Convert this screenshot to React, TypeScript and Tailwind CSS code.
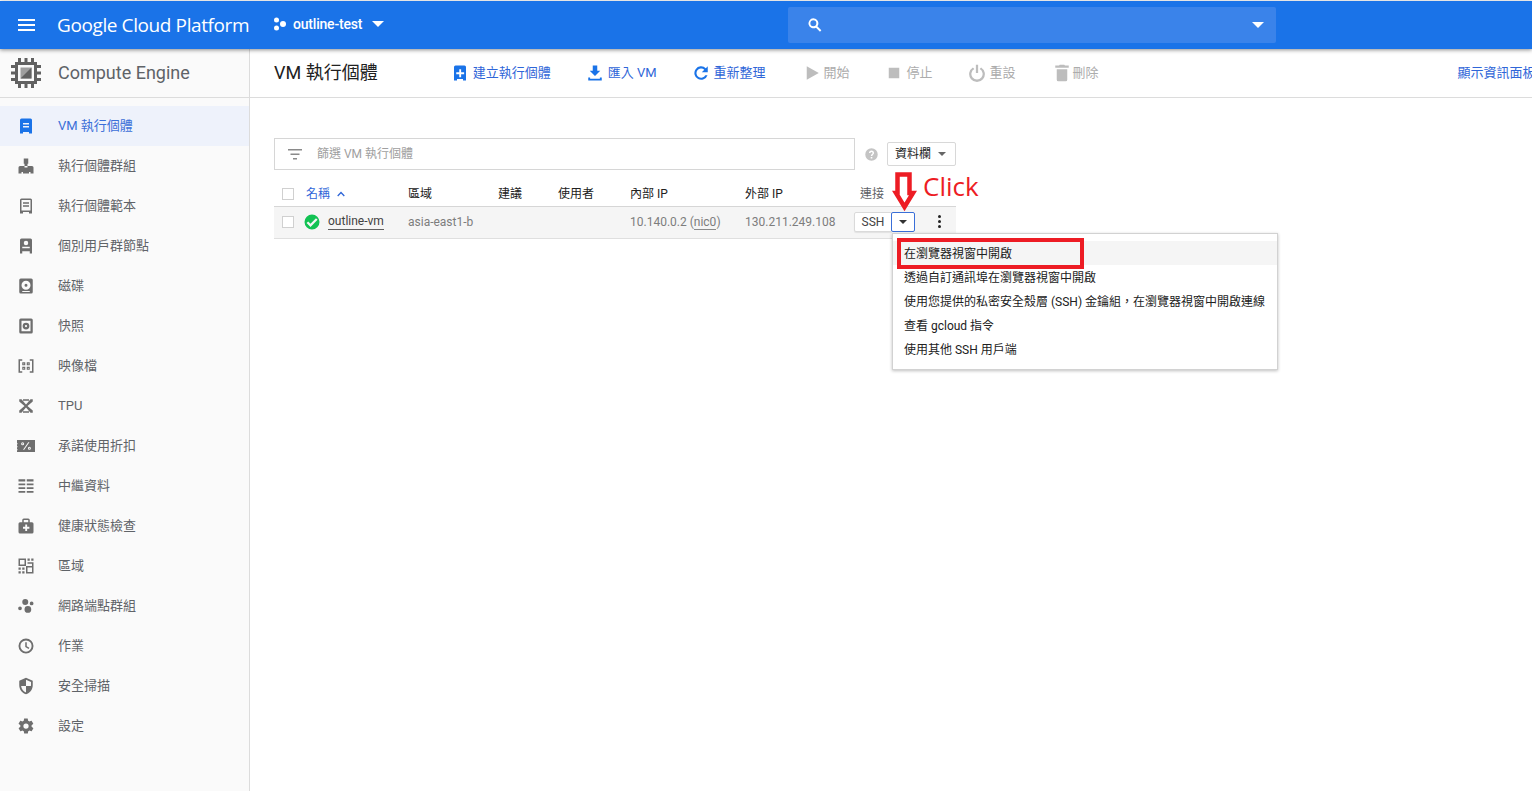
import type { ReactNode } from "react";

const FONT = "font-['Roboto','Noto_Sans_CJK_TC','Noto_Sans_CJK_SC',sans-serif]";

function Icon({ d, size = 18, className = "" }: { d: string; size?: number; className?: string }) {
  return (
    <svg className={`shrink-0 ${className}`} fill="currentColor" height={size} viewBox="0 0 24 24" width={size}>
      <path d={d} fillRule="evenodd" />
    </svg>
  );
}

const ICONS = {
  instance: "M6 2h12a2 2 0 0 1 2 2v18h-4v-2H8v2H4V4a2 2 0 0 1 2-2zm2 6v2h8V8H8zm0 4v2h8v-2H8z",
  group: "M9 2h6v7h-1v3h6a2 2 0 0 1 2 2v8h-4v-2h-2v2h-4v-8h2v-2h-4v2h2v8H8v-2H6v2H2v-8a2 2 0 0 1 2-2h6V9H9V2z",
  template: "M6 2h12a2 2 0 0 1 2 2v18h-4v-2H8v2H4V4a2 2 0 0 1 2-2zm0 2v14h12V4H6zm2 3h8v2H8V7zm0 4h8v2H8v-2z",
  node: "M6 2h12a2 2 0 0 1 2 2v18h-3v-3H7v3H4V4a2 2 0 0 1 2-2zm6 3a3 3 0 1 0 0 6 3 3 0 0 0 0-6zm-5 8v2h10v-2H7z",
  disk: "M5 2h14a2 2 0 0 1 2 2v16a2 2 0 0 1-2 2H5a2 2 0 0 1-2-2V4a2 2 0 0 1 2-2zm7 3a6 6 0 1 0 0 12 6 6 0 0 0 0-12zm0 4a2 2 0 1 1 0 4 2 2 0 0 1 0-4zM7 18.500h10V20H7z",
  snapshot: "M5 2h14a2 2 0 0 1 2 2v16a2 2 0 0 1-2 2H5a2 2 0 0 1-2-2V4a2 2 0 0 1 2-2zm1 3v14h12V5H6zm6 2.500a4.500 4.500 0 1 1 0 9 4.500 4.500 0 0 1 0-9zm0 3a1.500 1.500 0 1 0 0 3 1.500 1.500 0 0 0 0-3z",
  image: "M2 3h5v2H4v14h3v2H2V3zm15 0h5v18h-5v-2h3V5h-3V3zM7 7h4v4H7V7zm6 0h4v4h-4V7zM7 13h4v4H7v-4zm6 0h4v4h-4v-4zM8.500 8.500v1h1v-1h-1zm6 0v1h1v-1h-1zm-6 6v1h1v-1h-1zm6 0v1h1v-1h-1z",
  tpu: "M3 3h3l6 7 6-7h3v3l-7 6 7 6v3h-3l-6-7-6 7H3v-3l7-6-7-6V3zM8 3h8v2H8V3zm0 16h8v2H8v-2z",
  discount: "M0 4h24v16H0v-2l1-1-1-1v-2l1-1-1-1v-2l1-1-1-1V6zm7.500 3a2 2 0 1 0 0 4 2 2 0 0 0 0-4zm0 1.300a.7.700 0 1 1 0 1.400.7.700 0 0 1 0-1.400zM15 7l-7 10h1.600l7-10H15zm1.500 6a2 2 0 1 0 0 4 2 2 0 0 0 0-4zm0 1.300a.7.700 0 1 1 0 1.400.7.700 0 0 1 0-1.400z",
  metadata: "M2 3h9v3H2V3zm11 0h9v3h-9V3zM2 8.500h9v2.500H2V8.500zm11 0h9v2.500h-9V8.500zM2 13.500h9V16H2v-2.500zm11 0h9V16h-9v-2.500zM2 18.500h9V21H2v-2.500zm11 0h9V21h-9v-2.500z",
  health: "M9 2h6a2 2 0 0 1 2 2v3h3a2 2 0 0 1 2 2v11a2 2 0 0 1-2 2H4a2 2 0 0 1-2-2V9a2 2 0 0 1 2-2h3V4a2 2 0 0 1 2-2zm0 2v3h6V4H9zm2 6v3H8v2.500h3v3h2.500v-3h3V13h-3v-3H11z",
  zones: "M2 2h10v10H2V2zm2 2v6h6V4H4zm10-2h3v3h-3V2zm5 0h3v3h-3V2zM14 7h8v15H12V12h2V7zm0 7v6h6v-6h-6zm0-5v3h6V9h-6zM2 14h3v3H2v-3zm5 0h3v3H7v-3zM2 19h3v3H2v-3zm5 0h3v3H7v-3z",
  neg: "M11 2.500a4 4 0 1 1 0 8 4 4 0 0 1 0-8zM19.500 6a2.500 2.500 0 1 1 0 5 2.500 2.500 0 0 1 0-5zM4 12.500A2.500 2.500 0 1 1 4 17.500 2.500 2.500 0 0 1 4 12.500zM14.500 12a4.500 4.500 0 1 1 0 9 4.500 4.500 0 0 1 0-9z",
  clock: "M12 2a10 10 0 1 1 0 20 10 10 0 0 1 0-20zm0 2.500a7.500 7.500 0 1 0 0 15 7.500 7.500 0 0 0 0-15zM11 7h2v5.200l3.500 2.100-1 1.600L11 13.300V7z",
  shield: "M12 1l9 4v6c0 5.500-3.800 10.700-9 12-5.200-1.300-9-6.500-9-12V5l9-4zm0 2.500V12H5.500c.5 4 3 7.600 6.500 8.700V12h6.500c.1-.4.200-.7.200-1V6.500L12 3.500z",
  gear: "M19.400 13c0-.3.100-.6.100-1s0-.7-.1-1l2.100-1.600c.2-.2.200-.4.100-.6l-2-3.500c-.1-.2-.4-.3-.6-.2l-2.500 1c-.5-.4-1.100-.7-1.700-1l-.4-2.600c0-.3-.2-.5-.5-.5h-4c-.2 0-.5.200-.5.400l-.4 2.700c-.6.200-1.100.6-1.700 1l-2.500-1c-.2-.1-.5 0-.6.200l-2 3.500c-.1.200-.1.400.1.600L4.500 11c0 .3-.1.700-.1 1s0 .7.1 1l-2.100 1.600c-.2.200-.2.400-.1.600l2 3.500c.1.200.4.300.6.200l2.500-1c.5.400 1.100.7 1.700 1l.4 2.600c0 .2.200.4.500.4h4c.2 0 .5-.2.500-.4l.4-2.600c.6-.3 1.200-.6 1.700-1l2.500 1c.2.100.5 0 .6-.2l2-3.500c.1-.2.100-.5-.1-.6L19.400 13zM12 15.500a3.500 3.500 0 1 1 0-7 3.500 3.500 0 0 1 0 7z",
  add: "M6 2h12a2 2 0 0 1 2 2v18h-4v-2H8v2H4V4a2 2 0 0 1 2-2zm5 5v4H7v2.500h4v4h2.500v-4h4V11h-4V7H11z",
  import: "M9 2h6v7h4l-7 7-7-7h4V2zM3 18h2.500v1.500h13V18H21v4H3v-4z",
  refresh: "M18.400 5.600A9 9 0 1 0 20.700 15h-3a6.200 6.200 0 1 1-1.300-7.400L13 11h8V3l-2.600 2.600z",
  play: "M5 3l16 9-16 9V3z",
  stop: "M5 5h14v14H5V5z",
  power: "M10.500 1h3v11h-3V1zM6.500 4.500l2 2.200a7.500 7.500 0 1 0 7 0l2-2.200a10.500 10.500 0 1 1-11 0z",
  trash: "M9 1h6l1 1h5v3H3V2h5l1-1zM5 7h14v14a2 2 0 0 1-2 2H7a2 2 0 0 1-2-2V7z",
  search: "M9.500 2a7.500 7.500 0 0 1 6 12l6 6-2 2-6-6a7.500 7.500 0 1 1-4-14zm0 3a4.500 4.500 0 1 0 0 9 4.500 4.500 0 0 0 0-9z",
  help: "M12 2a10 10 0 1 1 0 20 10 10 0 0 1 0-20zm-1.300 14v2.500h2.600V16h-2.600zM12 5.500a4 4 0 0 0-4 4h2.300a1.700 1.700 0 1 1 3.400 0c0 1.700-2.800 1.700-2.800 5h2.400c0-2.300 2.700-2.600 2.700-5a4 4 0 0 0-4-4z",
  check: "M12 2a10 10 0 1 1 0 20 10 10 0 0 1 0-20zm5.300 5L10 14.300 6.900 11.200 4.800 13.300 10 18.500l9.400-9.400L17.300 7z",
};

const NAV: { label: string; icon: string }[] = [
  { label: "VM 執行個體", icon: ICONS.instance },
  { label: "執行個體群組", icon: ICONS.group },
  { label: "執行個體範本", icon: ICONS.template },
  { label: "個別用戶群節點", icon: ICONS.node },
  { label: "磁碟", icon: ICONS.disk },
  { label: "快照", icon: ICONS.snapshot },
  { label: "映像檔", icon: ICONS.image },
  { label: "TPU", icon: ICONS.tpu },
  { label: "承諾使用折扣", icon: ICONS.discount },
  { label: "中繼資料", icon: ICONS.metadata },
  { label: "健康狀態檢查", icon: ICONS.health },
  { label: "區域", icon: ICONS.zones },
  { label: "網路端點群組", icon: ICONS.neg },
  { label: "作業", icon: ICONS.clock },
  { label: "安全掃描", icon: ICONS.shield },
  { label: "設定", icon: ICONS.gear },
];

const ACTIONS = [
  { label: "建立執行個體", icon: ICONS.add, left: "ml-[73px] gap-1", active: true },
  { label: "匯入 VM", icon: ICONS.import, left: "ml-[35px] gap-1", active: true },
  { label: "重新整理", icon: ICONS.refresh, left: "ml-[35px] gap-1", active: true },
  { label: "開始", icon: ICONS.play, left: "ml-[37px] gap-[3px]", active: false },
  { label: "停止", icon: ICONS.stop, left: "ml-[35px] gap-1", active: false },
  { label: "重設", icon: ICONS.power, left: "ml-[35px] gap-1", active: false },
  { label: "刪除", icon: ICONS.trash, left: "ml-[37px] gap-0.5", active: false },
];

const MENU = [
  "在瀏覽器視窗中開啟",
  "透過自訂通訊埠在瀏覽器視窗中開啟",
  "使用您提供的私密安全殼層 (SSH) 金鑰組\uFF0C在瀏覽器視窗中開啟連線",
  "查看 gcloud 指令",
  "使用其他 SSH 用戶端",
];

function Caret({ className = "" }: { className?: string }) {
  return (
    <span className={`inline-block h-0 w-0 border-x-[4px] border-t-[4px] border-x-transparent border-t-current ${className}`} />
  );
}

function Checkbox() {
  return <span className="ml-2 block h-3 w-3 border border-[#d0d0d0] bg-white" />;
}

function Row({ className, children }: { className: string; children: ReactNode }) {
  return (
    <div className={`grid w-[682px] grid-cols-[32px_102px_90px_60px_72px_115px_109px_102px] items-center text-xs ${className}`}>
      {children}
    </div>
  );
}

export default function App() {
  return (
    <div className={`${FONT} relative flex h-[791px] w-[1532px] flex-col overflow-hidden bg-white pt-px text-[13px] text-[#212121]`}>
      {/* top bar */}
      <header className="relative z-10 flex h-12 shrink-0 items-center bg-[#1a73e8] text-white shadow-[0_1px_4px_rgba(0,0,0,0.45)]">
        <div className="ml-[18px] flex w-[17px] flex-col gap-[3px]">
          <span className="h-0.5 bg-white" />
          <span className="h-0.5 bg-white" />
          <span className="h-0.5 bg-white" />
        </div>
        <span className="ml-[22px] w-[216px] font-['Open_Sans',sans-serif] text-[19px] tracking-[-0.4px]">Google Cloud Platform</span>
        <svg className="-mt-0.5" fill="white" height="14" viewBox="0 0 14 14" width="14">
          <circle cx="3.500" cy="3" r="2.500" />
          <circle cx="3.500" cy="11" r="2.500" />
          <circle cx="10" cy="7" r="3" />
        </svg>
        <span className="ml-1.5 -mt-0.5 text-sm font-medium tracking-[-0.2px]">outline-test</span>
        <Caret className="ml-[10px] -mt-0.5 border-x-[6px] border-t-[6px] text-white" />
        <div className="ml-[404px] flex h-9 w-[488px] items-center rounded-[2px] bg-[#3a83ea] pl-[19px] pr-3">
          <Icon d={ICONS.search} size={16} />
          <Caret className="ml-auto border-x-[6px] border-t-[6px] text-white" />
        </div>
      </header>

      <div className="flex min-h-0 flex-1">
        {/* sidebar */}
        <aside className="w-[250px] shrink-0 border-r border-[#dcdcdc] bg-[#fafafa]">
          <div className="flex h-[49px] items-center border-b border-[#dcdcdc]">
            <svg className="ml-[10px]" height="32" viewBox="0 0 32 32" width="32">
              <path
                d="M8 1h3v4H8zM14.500 1h3v4h-3zM21 1h3v4h-3zM8 27h3v4H8zM14.500 27h3v4h-3zM21 27h3v4h-3zM1 8h4v3H1zM1 14.500h4v3H1zM1 21h4v3H1zM27 8h4v3h-4zM27 14.500h4v3h-4zM27 21h4v3h-4z"
                fill="#616161"
              />
              <rect fill="none" height="19" stroke="#616161" strokeWidth="3" width="19" x="6.500" y="6.500" />
              <rect fill="#9e9e9e" height="11" width="11" x="10.500" y="10.500" />
              <path d="M21.500 10.500v11h-11z" fill="#616161" />
            </svg>
            <span className="ml-[16px] text-lg text-[#5f6368]">Compute Engine</span>
          </div>
          <nav className="pt-2">
            {NAV.map((item, i) => (
              <div className={`flex h-10 items-center pl-[17px] ${i === 0 ? "bg-[#eef2fb] text-[#3b6fd8]" : "text-[#5f6368]"}`} key={item.label}>
                <Icon className={i === 0 ? "text-[#1a73e8]" : "text-[#6e6e6e]"} d={item.icon} />
                <span className="ml-[23px]">{item.label}</span>
              </div>
            ))}
          </nav>
        </aside>

        {/* main */}
        <main className="relative min-w-0 flex-1">
          <div className="flex h-[49px] items-center whitespace-nowrap border-b border-[#dcdcdc] pl-6">
            <h1 className="w-[104px] text-lg text-[#212121]">VM 執行個體</h1>
            {ACTIONS.map((a) => (
              <div className={`flex items-center ${a.left} ${a.active ? "text-[#2f66d8]" : "text-[#acacac]"}`} key={a.label}>
                <Icon className={a.active ? "text-[#1a73e8]" : "text-[#bdbdbd]"} d={a.icon} />
                <span>{a.label}</span>
              </div>
            ))}
            <span className="ml-[359px] text-[#2f66d8]">顯示資訊面板</span>
          </div>

          <div className="pl-6 pt-10">
            <div className="flex items-center text-xs">
              <div className="flex h-8 w-[581px] items-center border border-[#d6d6d6] pl-[13px] text-[#a0a0a0]">
                <svg className="text-[#8a8a8a]" fill="currentColor" height="11" viewBox="0 0 14 11" width="14">
                  <path d="M0 0h14v1.500H0zM2.500 4.500h9V6h-9zM5 9h4v1.500H5z" />
                </svg>
                <span className="ml-[15px]">篩選 VM 執行個體</span>
              </div>
              <span className="ml-[9px] text-[#c4c4c4]">
                <Icon d={ICONS.help} size={15} />
              </span>
              <div className="ml-2 flex h-6 w-[69px] items-center rounded-[2px] border border-[#d8d8d8] pl-[7px] text-[#212121]">
                資料欄
                <Caret className="ml-[7px] text-[#666]" />
              </div>
            </div>

            <Row className="mt-[10px] h-[27px] border-b border-[#d6d6d6] pt-0.5">
              <Checkbox />
              <span className="flex items-center gap-[7px] text-[#2f66d8]">
                名稱
                <svg fill="none" height="6" stroke="#2f66d8" strokeWidth="1.300" viewBox="0 0 8 6" width="8">
                  <path d="M.7 5 4 1.500 7.300 5" />
                </svg>
              </span>
              <span>區域</span>
              <span>建議</span>
              <span>使用者</span>
              <span>內部 IP</span>
              <span>外部 IP</span>
              <span className="pl-1.5 text-[#5f6368]">連接</span>
            </Row>
            <Row className="h-[32px] border-b border-[#dfdfdf] bg-[#f5f5f5] pb-0.5 text-[#7d7d7d]">
              <Checkbox />
              <span className="-ml-[3px] flex items-center text-[#424242]">
                <Icon className="text-[#12c253]" d={ICONS.check} />
                <span className="ml-[7px] border-b border-[#5f5f5f] leading-[15px]">outline-vm</span>
              </span>
              <span>asia-east1-b</span>
              <span />
              <span />
              <span className="whitespace-nowrap">
                10.140.0.2 (<span className="border-b border-[#8a8a8a]">nic0</span>)
              </span>
              <span className="whitespace-nowrap">130.211.249.108</span>
              <span className="flex items-center">
                <span className="flex h-5 w-[38px] items-center justify-center rounded-l-[2px] border border-[#dadada] bg-white text-[#444] shadow-[0_1px_1px_rgba(0,0,0,0.08)]">
                  SSH
                </span>
                <span className="-ml-px flex h-5 w-6 items-center justify-center rounded-[2px] border border-[#3a6fd8] bg-white text-[#333]">
                  <Caret />
                </span>
                <span className="ml-[23px] flex flex-col gap-[2px]">
                  <span className="h-[3px] w-[3px] rounded-full bg-[#222]" />
                  <span className="h-[3px] w-[3px] rounded-full bg-[#222]" />
                  <span className="h-[3px] w-[3px] rounded-full bg-[#222]" />
                </span>
              </span>
            </Row>
          </div>

          {/* ssh dropdown */}
          <div className="absolute left-[642px] top-[184px] z-20 w-[386px] border border-[#d2d2d2] bg-white pb-2 pt-[7px] text-xs text-[#212121] shadow-[0_1px_3px_rgba(0,0,0,0.25)]">
            {MENU.map((m, i) => (
              <div className={`flex h-6 items-center whitespace-nowrap pl-[11px] pt-0.5 ${i === 0 ? "bg-[#f5f5f5]" : ""}`} key={m}>
                {m}
              </div>
            ))}
          </div>

          {/* annotation: red box, arrow and label */}
          <div className="absolute left-[647px] top-[189px] z-30 h-[31px] w-[187px] border-4 border-[#ed1c24]" />
          <svg className="absolute left-[642px] top-[123px] z-30" height="41" viewBox="0 0 26 41" width="26">
            <path d="M5.500 2.500h12V21H21L12.500 35 4 21h1.500z" fill="white" stroke="#ed1c24" strokeWidth="4.500" />
          </svg>
          <span className="absolute left-[673px] top-[119px] z-30 font-['Open_Sans',sans-serif] text-[26px] leading-[36px] text-[#ed1c24]">Click</span>
        </main>
      </div>
    </div>
  );
}
